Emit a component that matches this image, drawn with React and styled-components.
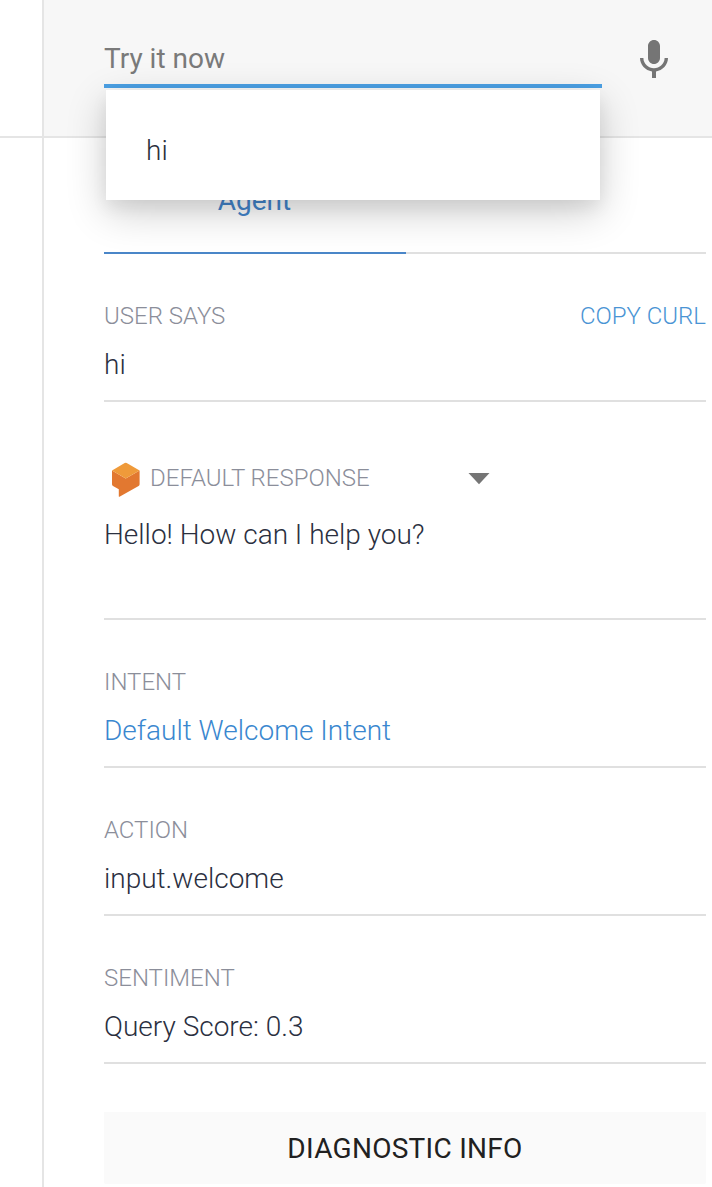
import React from 'react';
import styled, { createGlobalStyle } from 'styled-components';

const Global = createGlobalStyle`
  * { box-sizing: border-box; }
  body { margin: 0; background: #fff; font-family: Roboto, sans-serif; color: #2b303b; overflow: hidden; }
`;
const Page = styled.div`display: flex; height: 1187px; width: 712px; overflow: hidden;`;
const Rail = styled.aside`width: 42px; flex: none;`;
const RailTop = styled.div`height: 138px; border-bottom: 2px solid #e5e5e5;`;
const Panel = styled.main`flex: 1; border-left: 2px solid #e5e5e5; min-width: 0;`;
const Header = styled.header`
  display: flex; justify-content: space-between; height: 138px; padding: 0 34px 0 60px;
  background: #f7f7f7; border-bottom: 2px solid #e5e5e5;
`;
const Query = styled.div`position: relative; width: 498px; height: 88px; padding-top: 43px; border-bottom: 4px solid #4ba0e4;`;
const Placeholder = styled.div`font-size: 28px; line-height: 32px; color: #7a7a7a;`;
const Menu = styled.div`
  position: absolute; z-index: 2; top: 90px; left: 2px; width: 494px; height: 110px; padding: 45px 40px 0;
  background: #fff; box-shadow: 0 12px 40px rgba(0,0,0,.2), 0 8px 16px rgba(0,0,0,.06);
  font-size: 28px; line-height: 32px; font-weight: 300;
`;
const Mic = styled.svg`width: 48px; height: 48px; margin-top: 36px; fill: #757575;`;
const Content = styled.div`padding: 0 6px 0 60px;`;
const Tabs = styled.nav`display: flex; height: 116px; border-bottom: 2px solid #e0e0e0;`;
const Tab = styled.div`
  width: 302px; height: 116px; padding: 47px 1px 0 0; text-align: center;
  font-size: 28px; line-height: 32px; color: #4385cc; border-bottom: 2px solid #4a86c8;
`;
const Section = styled.section`height: ${p => p.$h || 148}px; padding-top: ${p => p.$top || 48}px; border-bottom: 2px solid #e0e0e0;`;
const LabelRow = styled.div`display: flex; justify-content: space-between; align-items: center; height: 28px;`;
const Label = styled.span`font-size: 24px; line-height: 28px; font-weight: 300; color: #8b8e9a; white-space: nowrap;`;
const CopyLink = styled(Label)`color: #4a94d4;`;
const Value = styled.div`
  font-size: 28px; line-height: 32px; font-weight: 300; margin-top: ${p => p.$gap || 19}px;
  color: ${p => (p.$link ? '#3a87cf' : '#2b303f')};
`;
const Source = styled.div`display: flex; align-items: center; gap: 9px;`;
const Cube = styled.svg`width: 31px; height: 36px; margin: 3px 0 0 6px;`;
const Arrow = styled.svg`width: 22px; height: 12px; margin: 1px 216px 0 0;`;
const Diagnostic = styled.button`
  display: block; width: 100%; height: 72px; margin-top: 48px; padding: 2px 0 0; border: 0; border-radius: 0 0 2px 2px;
  background: #fafafa; color: #212121; font: 400 28px/32px Roboto, sans-serif; letter-spacing: .28px;
`;

export default function App() {
  return (
    <Page>
      <Global />
      <Rail><RailTop /></Rail>
      <Panel>
        <Header>
          <Query>
            <Placeholder>Try it now</Placeholder>
            <Menu>hi</Menu>
          </Query>
          <Mic viewBox="0 0 24 24">
            <path d="M12 14c1.66 0 3-1.34 3-3V5c0-1.66-1.34-3-3-3S9 3.34 9 5v6c0 1.66 1.34 3 3 3zM17.3 11c0 3-2.54 5.1-5.3 5.1S6.7 14 6.7 11H5c0 3.41 2.72 6.23 6 6.72V21h2v-3.28c3.28-.48 6-3.3 6-6.72h-1.7z" />
          </Mic>
        </Header>
        <Content>
          <Tabs><Tab>Agent</Tab></Tabs>
          <Section>
            <LabelRow><Label>USER SAYS</Label><CopyLink>COPY CURL</CopyLink></LabelRow>
            <Value>hi</Value>
          </Section>
          <Section $h={218} $top={62}>
            <LabelRow>
              <Source>
                <Cube viewBox="0 0 31 36">
                  <path fill="#e27830" d="M2 8.5 15.7 16.5 29.6 8.500V22.300Q29.600 23.300 28.600 23.900L9.500 34.700Q8.800 35 8.800 34.200V27.200L3 23.900Q2 23.300 2 22.300Z" />
                  <path fill="#ef9a3a" d="M14.700 1Q15.700.500 16.700 1L29.600 8.500 15.700 16.500 2 8.500Z" />
                </Cube>
                <Label>DEFAULT RESPONSE</Label>
              </Source>
              <Arrow viewBox="0 0 22 12"><path fill="#757575" d="M.5 0h21L11 11.2z" /></Arrow>
            </LabelRow>
            <Value $gap={27}>Hello! How can I help you?</Value>
          </Section>
          <Section><LabelRow><Label>INTENT</Label></LabelRow><Value $link>Default Welcome Intent</Value></Section>
          <Section><LabelRow><Label>ACTION</Label></LabelRow><Value>input.welcome</Value></Section>
          <Section><LabelRow><Label>SENTIMENT</Label></LabelRow><Value>Query Score: 0.3</Value></Section>
          <Diagnostic>DIAGNOSTIC INFO</Diagnostic>
        </Content>
      </Panel>
    </Page>
  );
}
